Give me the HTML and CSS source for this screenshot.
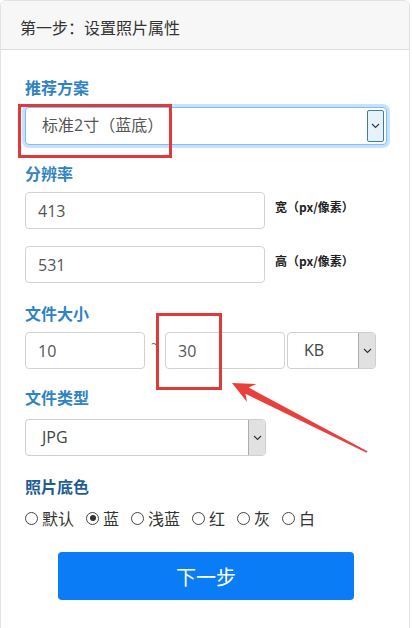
FILE: index.html
```html
<!DOCTYPE html>
<html lang="zh-CN">
<head>
<meta charset="utf-8">
<title>设置照片属性</title>
<link rel="stylesheet" href="styles.css">
</head>
<body>
<div class="card">
  <div class="card-header">第一步：设置照片属性</div>
  <div class="card-body">
    <div class="label first">推荐方案</div>
    <div class="select select-wide focused">
      <span class="select-text">标准2寸（蓝底）</span>
      <span class="select-btn"><svg width="9" height="6" viewBox="0 0 9 6"><path d="M1 1l3.5 3.5L8 1" fill="none" stroke="#333" stroke-width="1.1"/></svg></span>
    </div>

    <div class="label res">分辨率</div>
    <div class="field-row">
      <input class="input input-half" type="text" value="413">
      <span class="unit">宽（px/像素）</span>
    </div>
    <div class="field-row second">
      <input class="input input-half" type="text" value="531">
      <span class="unit">高（px/像素）</span>
    </div>

    <div class="label size">文件大小</div>
    <div class="size-row">
      <input class="input input-small" type="text" value="10">
      <span class="tilde">~</span>
      <input class="input input-small" type="text" value="30">
      <div class="select select-unit">
        <span class="select-text">KB</span>
        <span class="select-btn"><svg width="9" height="6" viewBox="0 0 9 6"><path d="M1 1l3.5 3.5L8 1" fill="none" stroke="#333" stroke-width="1.1"/></svg></span>
      </div>
    </div>

    <div class="label type">文件类型</div>
    <div class="select select-half">
      <span class="select-text">JPG</span>
      <span class="select-btn"><svg width="9" height="6" viewBox="0 0 9 6"><path d="M1 1l3.5 3.5L8 1" fill="none" stroke="#333" stroke-width="1.1"/></svg></span>
    </div>

    <div class="label dark">照片底色</div>
    <div class="radios">
      <label class="radio"><span class="dot"></span>默认</label>
      <label class="radio"><span class="dot checked"></span>蓝</label>
      <label class="radio"><span class="dot"></span>浅蓝</label>
      <label class="radio"><span class="dot"></span>红</label>
      <label class="radio"><span class="dot"></span>灰</label>
      <label class="radio"><span class="dot"></span>白</label>
    </div>

    <div class="actions">
      <button class="btn-next" type="button">下一步</button>
    </div>
  </div>
</div>

<svg class="annotation" width="412" height="628" viewBox="0 0 412 628">
  <rect x="19.5" y="105.5" width="151" height="51" fill="none" stroke="#e0393a" stroke-width="3"/>
  <rect x="157.5" y="314.5" width="63" height="74" fill="none" stroke="#e0393a" stroke-width="3"/>
  <polygon fill="#e8403a" points="232,383 256.2,384.1 248.7,387.6 367.4,451.3 366.6,452.7 245.5,393.8 247,401.9"/>
</svg>
</body>
</html>
```

FILE: styles.css
```css
* { box-sizing: border-box; }

body {
  margin: 0;
  background: #fff;
  font-family: "Open Sans", "Noto Sans CJK SC", sans-serif;
  color: #333;
}

.card {
  width: 410px;
  border: 1px solid #e3e3e3;
  border-radius: 6px;
  min-height: 640px;
  overflow: hidden;
}

.card-header {
  height: 49px;
  padding: 4px 0 0 19px;
  line-height: 44px;
  font-size: 16px;
  background: #f7f7f7;
  border-bottom: 1px solid #dcdcdc;
  color: #333;
  font-family: "Noto Sans CJK SC", sans-serif;
}

.card-body {
  padding: 26px 22px 0 24px;
}

.label {
  font-family: "Noto Sans CJK SC", sans-serif;
  font-weight: 700;
  font-size: 16px;
  line-height: 22px;
  color: #2f83c4;
  margin: 17px 0 8px;
}
.label.first { margin-top: 0; margin-bottom: 9px; }
.label.size { margin-top: 19px; }
.label.type { margin-top: 17px; margin-bottom: 11px; }
.label.dark { color: #1f5d96; margin-top: 19px; margin-bottom: 10px; }

.select {
  display: flex;
  align-items: stretch;
  height: 37px;
  border: 1px solid #cfcfcf;
  border-radius: 4px;
  background: #fff;
  overflow: hidden;
}
.select-wide { width: 362px; height: 38px; }
.select-half { width: 241px; }
.select-unit { width: 89px; }

.select.focused {
  border-color: #80bdff;
  box-shadow: 0 0 0 3px rgba(0, 123, 255, 0.22);
}

.select-text {
  flex: 1;
  padding-left: 16px;
  line-height: 35px;
  font-size: 16px;
  color: #444;
  font-family: "Open Sans", "Noto Sans CJK SC", sans-serif;
}
.select-wide .select-text { color: #555; }

.select-btn {
  width: 17px;
  display: flex;
  align-items: center;
  justify-content: center;
  background: #e1e1e1;
  border-left: 1px solid #adadad;
}
.select.focused .select-btn {
  background: #e8f2fb;
  border: 1px solid #3d7ab3;
  border-radius: 2px;
  margin: 2px 2px 2px 0;
}

.field-row {
  display: flex;
  align-items: center;
  gap: 10px;
}
.field-row.second { margin-top: 17px; }

.input {
  height: 37px;
  border: 1px solid #d2d2d2;
  border-radius: 4px;
  padding: 0 12px;
  font-family: "Open Sans", "Noto Sans CJK SC", sans-serif;
  font-size: 16px;
  color: #555;
  background: #fff;
  outline: none;
}
.input-half { width: 240px; }
.input-small { width: 120px; }

.unit {
  font-family: "Noto Sans CJK SC", sans-serif;
  font-weight: 600;
  font-size: 12px;
  color: #222;
  margin-top: -8px;
}

.size-row {
  display: flex;
  align-items: center;
}
.tilde {
  width: 20px;
  text-align: center;
  font-size: 14px;
  color: #666;
  margin-top: -14px;
}
.size-row .select-unit { margin-left: 2px; }

.radios {
  display: flex;
  align-items: center;
  gap: 12px;
  font-family: "Noto Sans CJK SC", sans-serif;
  font-size: 16px;
  line-height: 22px;
  color: #333;
}
.radio {
  display: flex;
  align-items: center;
}
.dot {
  width: 13px;
  height: 13px;
  border: 1px solid #444;
  border-radius: 50%;
  margin-right: 4px;
  position: relative;
}
.dot.checked::after {
  content: "";
  position: absolute;
  left: 2.5px;
  top: 2.5px;
  width: 6px;
  height: 6px;
  border-radius: 50%;
  background: #333;
}

.actions {
  display: flex;
  justify-content: center;
  margin-top: 23px;
}
.btn-next {
  width: 296px;
  height: 48px;
  border: none;
  border-radius: 4px;
  background: #0a7cf6;
  color: #fff;
  font-family: "Noto Sans CJK SC", sans-serif;
  font-size: 20px;
}

.annotation {
  position: absolute;
  left: 0;
  top: 0;
  pointer-events: none;
}
```
